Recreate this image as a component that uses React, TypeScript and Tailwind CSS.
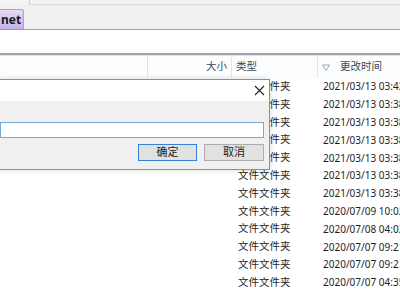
import React from "react";

const rows = [
  "2021/03/13 03:43",
  "2021/03/13 03:38",
  "2021/03/13 03:38",
  "2021/03/13 03:38",
  "2021/03/13 03:38",
  "2021/03/13 03:38",
  "2021/03/13 03:38",
  "2020/07/09 10:02",
  "2020/07/08 04:02",
  "2020/07/07 09:21",
  "2020/07/07 09:21",
  "2020/07/07 04:35",
];

export default function App() {
  return (
    <div
      className="relative w-[400px] h-[300px] overflow-hidden bg-white text-[10.5px] text-[#1e1e1e]"
      style={{ fontFamily: '"Noto Sans", "Noto Sans CJK SC", sans-serif' }}
    >
      {/* top strip */}
      <div className="flex h-[5px] bg-[#f3f3f3]">
        <div className="w-[30px] border-r border-[#cfcfcf]" />
        <div className="flex-1 border-b border-[#d6d6d6]" />
      </div>
      {/* tab row */}
      <div className="flex h-[25px] items-end bg-[#f0f0f0] border-b border-[#a0a0a0]">
        <div className="h-[20px] w-[24px] rounded-tr-[3px] border-r border-t border-[#a9a9a9] bg-gradient-to-b from-[#e6dcf7] to-[#c4b0ea] pl-[1px] text-[12px] font-bold leading-[20px] text-[#1a1a1a]">
          net
        </div>
      </div>
      {/* white address area */}
      <div className="h-[25px] bg-white border-b-2 border-[#a3a3a3]" />
      <div className="h-[1px] bg-[#e3e3e3]" />
      {/* header */}
      <div className="flex h-[22px] items-center bg-[#fcfdff] text-[#3d4a5a] whitespace-nowrap">
        <div className="h-full w-[148px] shrink-0 border-r border-[#e5e5e5]" />
        <div className="w-[84px] shrink-0 h-full border-r border-[#e5e5e5] flex items-center justify-end pr-[4px]">大小</div>
        <div className="w-[86px] shrink-0 h-full border-r border-[#e5e5e5] flex items-center pl-[4px]">类型</div>
        <div className="flex-1 flex items-center pl-[4px]">
          <svg width="8" height="7" viewBox="0 0 8 7" className="mr-[10px] shrink-0">
            <path d="M0.5 1 L7.5 1 L4 6.5 Z" fill="none" stroke="#9aa4b0" strokeWidth="1" />
          </svg>
          更改时间
        </div>
      </div>
      {/* rows */}
      <div className="flex flex-col">
        {rows.map((d, i) => (
          <div key={i} className="flex h-[17.8px] items-center whitespace-nowrap">
            <div className="w-[238px] shrink-0" />
            <div className="w-[85px] shrink-0">文件文件夹</div>
            <div className="shrink-0 text-[10px]">{d}</div>
          </div>
        ))}
      </div>

      {/* dialog */}
      <div className="absolute left-[-1px] top-[79px] w-[271px] h-[91px] border border-[#5f9ad6] bg-[#f0f0f0] flex flex-col shadow-[0_0_6px_rgba(0,0,0,0.15)]">
        <div className="h-[21px] bg-white flex items-center justify-end pr-[4px]">
          <svg width="11" height="11" viewBox="0 0 11 11">
            <path d="M1 1 L10 10 M10 1 L1 10" stroke="#222" strokeWidth="1.1" />
          </svg>
        </div>
        <div className="flex-1 flex flex-col pr-[5px]">
          <div className="h-[21px]" />
          <div className="h-[16px] bg-white border border-[#7aa7d6]" />
          <div className="flex justify-end gap-[7px] mt-[6px] text-[11px]">
            <div className="w-[59px] h-[17px] border border-[#3583d6] bg-[#e1e1e1] flex items-center justify-center">确定</div>
            <div className="w-[60px] h-[17px] border border-[#adadad] bg-[#e1e1e1] flex items-center justify-center">取消</div>
          </div>
        </div>
      </div>
    </div>
  );
}
